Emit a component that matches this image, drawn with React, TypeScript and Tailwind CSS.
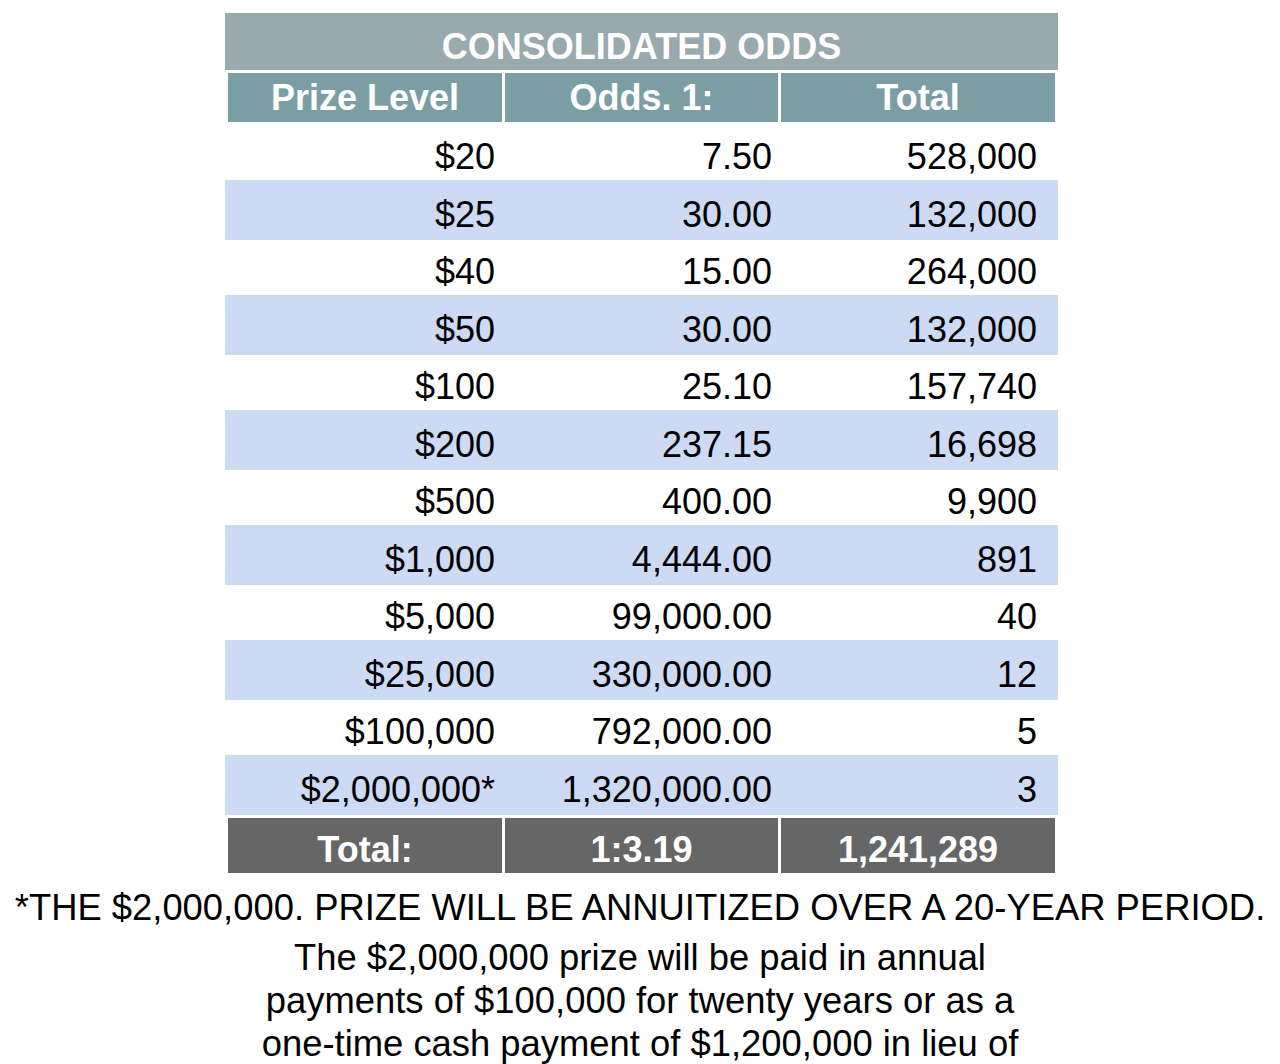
const rows = [
  ["$20", "7.50", "528,000"],
  ["$25", "30.00", "132,000"],
  ["$40", "15.00", "264,000"],
  ["$50", "30.00", "132,000"],
  ["$100", "25.10", "157,740"],
  ["$200", "237.15", "16,698"],
  ["$500", "400.00", "9,900"],
  ["$1,000", "4,444.00", "891"],
  ["$5,000", "99,000.00", "40"],
  ["$25,000", "330,000.00", "12"],
  ["$100,000", "792,000.00", "5"],
  ["$2,000,000*", "1,320,000.00", "3"],
];

export default function App() {
  return (
    <div className="min-h-[1064px] bg-white text-black" style={{ fontFamily: '"Liberation Sans", Arial, sans-serif' }}>
      <div className="pt-[13px]">
        <div className="ml-[225px] w-[833px]">
          {/* title */}
          <div className="flex h-[57px] items-center justify-center bg-[#98aaad] pt-[11px] text-[36px] font-bold text-white">
            CONSOLIDATED ODDS
          </div>

          {/* column headers */}
          <div className="grid grid-cols-[274px_273px_274px] gap-x-[3px] px-[3px] pt-[3px] pb-[3px]">
            {["Prize Level", "Odds. 1:", "Total"].map((h) => (
              <div key={h} className="flex h-[49px] items-center justify-center bg-[#7b9ea4] text-[36px] font-bold text-white">
                {h}
              </div>
            ))}
          </div>

          {/* prize rows */}
          {rows.map((r, i) => (
            <div
              key={r[0]}
              className={`grid grid-cols-[278px_277px_278px] text-[36px] ${i % 2 === 1 ? "h-[60px] bg-[#ccdaf4] pt-[8px]" : "h-[55px] bg-white pt-[5px]"}`}
            >
              <div className="flex items-center justify-end pr-[8px]">{r[0]}</div>
              <div className="flex items-center justify-end pr-[8px]">{r[1]}</div>
              <div className="flex items-center justify-end pr-[21px]">{r[2]}</div>
            </div>
          ))}

          {/* totals */}
          <div className="grid grid-cols-[274px_273px_274px] gap-x-[3px] px-[3px] pt-[3px]">
            {["Total:", "1:3.19", "1,241,289"].map((t) => (
              <div key={t} className="flex h-[55px] items-center justify-center bg-[#666666] pt-[8px] text-[36px] font-bold text-white">
                {t}
              </div>
            ))}
          </div>
        </div>

        {/* notes */}
        <p className="mt-[13px] whitespace-nowrap text-center text-[36.4px] leading-[43px]">
          *THE $2,000,000. PRIZE WILL BE ANNUITIZED OVER A 20-YEAR PERIOD.
        </p>
        <p className="mt-[7px] text-center text-[36.4px] leading-[43px]">
          The $2,000,000 prize will be paid in annual
          <br />
          payments of $100,000 for twenty years or as a
          <br />
          one-time cash payment of $1,200,000 in lieu of
          <br />
          the annual payments.
        </p>
      </div>
    </div>
  );
}
